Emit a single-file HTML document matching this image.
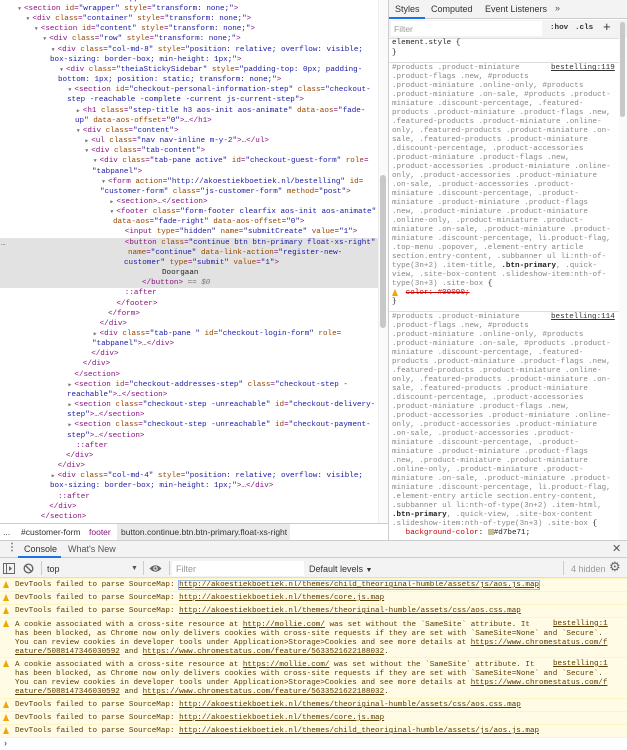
<!DOCTYPE html>
<html><head><meta charset="utf-8"><style>
*{margin:0;padding:0;box-sizing:border-box}
body{width:627px;height:750px;overflow:hidden;background:#fff;position:relative;font-family:"Liberation Sans",sans-serif;color:#222}
.m{font-family:"Liberation Mono",monospace;font-size:7.6px}
#el{position:absolute;left:0;top:4px;width:378px;line-height:10.16px}
#el div{position:relative;white-space:pre;height:10.16px}
.ar{position:absolute;font-size:5px;color:#6e6e6e;top:0}
.t{color:#881280}.a{color:#994500}.v{color:#1a1aa6}.k{color:#222}
.hl{position:absolute;left:0;top:237.7px;width:378px;height:50.8px;background:#e2e2e2}
.abs{position:absolute;white-space:pre}
#sty{position:absolute;left:392px;line-height:9px;color:#888;white-space:pre}
.cl{position:absolute;left:0;width:627px;background:#fffbe5;border-top:1px solid #fff5c2;color:#5c3c00;line-height:9px;white-space:pre}
.cl u{text-decoration:underline}
.wi{position:absolute;left:3px;width:0;height:0;border-left:3.5px solid transparent;border-right:3.5px solid transparent;border-bottom:7px solid #f2a600}
</style></head><body>

<div class="hl"></div>
<div class="abs m" style="left:1px;top:240px;color:#555">…</div>

<div id="el" class="m">
<div style="padding-left:24px"><span class="ar" style="left:18px">▼</span><span class="t">&lt;section</span> <span class="a">id</span><span class="t">=</span><span class="v">"wrapper"</span> <span class="a">style</span><span class="t">=</span><span class="v">"transform: none;"</span><span class="t">&gt;</span></div>
<div style="padding-left:32.4px"><span class="ar" style="left:26.4px">▼</span><span class="t">&lt;div</span> <span class="a">class</span><span class="t">=</span><span class="v">"container"</span> <span class="a">style</span><span class="t">=</span><span class="v">"transform: none;"</span><span class="t">&gt;</span></div>
<div style="padding-left:40.8px"><span class="ar" style="left:34.8px">▼</span><span class="t">&lt;section</span> <span class="a">id</span><span class="t">=</span><span class="v">"content"</span> <span class="a">style</span><span class="t">=</span><span class="v">"transform: none;"</span><span class="t">&gt;</span></div>
<div style="padding-left:49.2px"><span class="ar" style="left:43.2px">▼</span><span class="t">&lt;div</span> <span class="a">class</span><span class="t">=</span><span class="v">"row"</span> <span class="a">style</span><span class="t">=</span><span class="v">"transform: none;"</span><span class="t">&gt;</span></div>
<div style="padding-left:57.6px"><span class="ar" style="left:51.6px">▼</span><span class="t">&lt;div</span> <span class="a">class</span><span class="t">=</span><span class="v">"col-md-8"</span> <span class="a">style</span><span class="t">=</span><span class="v">"position: relative; overflow: visible;</span></div>
<div style="padding-left:50px"><span class="v">box-sizing: border-box; min-height: 1px;"</span><span class="t">&gt;</span></div>
<div style="padding-left:66px"><span class="ar" style="left:60px">▼</span><span class="t">&lt;div</span> <span class="a">class</span><span class="t">=</span><span class="v">"theiaStickySidebar"</span> <span class="a">style</span><span class="t">=</span><span class="v">"padding-top: 0px; padding-</span></div>
<div style="padding-left:58px"><span class="v">bottom: 1px; position: static; transform: none;"</span><span class="t">&gt;</span></div>
<div style="padding-left:74.4px"><span class="ar" style="left:68.4px">▼</span><span class="t">&lt;section</span> <span class="a">id</span><span class="t">=</span><span class="v">"checkout-personal-information-step"</span> <span class="a">class</span><span class="t">=</span><span class="v">"checkout-</span></div>
<div style="padding-left:67px"><span class="v">step -reachable -complete -current js-current-step"</span><span class="t">&gt;</span></div>
<div style="padding-left:82.8px"><span class="ar" style="left:76.8px">▶</span><span class="t">&lt;h1</span> <span class="a">class</span><span class="t">=</span><span class="v">"step-title h3 aos-init aos-animate"</span> <span class="a">data-aos</span><span class="t">=</span><span class="v">"fade-</span></div>
<div style="padding-left:75px"><span class="v">up"</span> <span class="a">data-aos-offset</span><span class="t">=</span><span class="v">"0"</span><span class="t">&gt;</span>…<span class="t">&lt;/h1&gt;</span></div>
<div style="padding-left:82.8px"><span class="ar" style="left:76.8px">▼</span><span class="t">&lt;div</span> <span class="a">class</span><span class="t">=</span><span class="v">"content"</span><span class="t">&gt;</span></div>
<div style="padding-left:91.2px"><span class="ar" style="left:85.2px">▶</span><span class="t">&lt;ul</span> <span class="a">class</span><span class="t">=</span><span class="v">"nav nav-inline m-y-2"</span><span class="t">&gt;</span>…<span class="t">&lt;/ul&gt;</span></div>
<div style="padding-left:91.2px"><span class="ar" style="left:85.2px">▼</span><span class="t">&lt;div</span> <span class="a">class</span><span class="t">=</span><span class="v">"tab-content"</span><span class="t">&gt;</span></div>
<div style="padding-left:99.6px"><span class="ar" style="left:93.6px">▼</span><span class="t">&lt;div</span> <span class="a">class</span><span class="t">=</span><span class="v">"tab-pane active"</span> <span class="a">id</span><span class="t">=</span><span class="v">"checkout-guest-form"</span> <span class="a">role</span><span class="t">=</span></div>
<div style="padding-left:92px"><span class="v">"tabpanel"</span><span class="t">&gt;</span></div>
<div style="padding-left:108px"><span class="ar" style="left:102px">▼</span><span class="t">&lt;form</span> <span class="a">action</span><span class="t">=</span><span class="v">"http://akoestiekboetiek.nl/bestelling"</span> <span class="a">id</span><span class="t">=</span></div>
<div style="padding-left:100px"><span class="v">"customer-form"</span> <span class="a">class</span><span class="t">=</span><span class="v">"js-customer-form"</span> <span class="a">method</span><span class="t">=</span><span class="v">"post"</span><span class="t">&gt;</span></div>
<div style="padding-left:116.4px"><span class="ar" style="left:110.4px">▶</span><span class="t">&lt;section&gt;</span>…<span class="t">&lt;/section&gt;</span></div>
<div style="padding-left:116.4px"><span class="ar" style="left:110.4px">▼</span><span class="t">&lt;footer</span> <span class="a">class</span><span class="t">=</span><span class="v">"form-footer clearfix aos-init aos-animate"</span></div>
<div style="padding-left:113px"><span class="a">data-aos</span><span class="t">=</span><span class="v">"fade-right"</span> <span class="a">data-aos-offset</span><span class="t">=</span><span class="v">"0"</span><span class="t">&gt;</span></div>
<div style="padding-left:124.8px"><span class="t">&lt;input</span> <span class="a">type</span><span class="t">=</span><span class="v">"hidden"</span> <span class="a">name</span><span class="t">=</span><span class="v">"submitCreate"</span> <span class="a">value</span><span class="t">=</span><span class="v">"1"</span><span class="t">&gt;</span></div>
<div style="padding-left:124.8px"><span class="t">&lt;button</span> <span class="a">class</span><span class="t">=</span><span class="v">"continue btn btn-primary float-xs-right"</span></div>
<div style="padding-left:128px"><span class="a">name</span><span class="t">=</span><span class="v">"continue"</span> <span class="a">data-link-action</span><span class="t">=</span><span class="v">"register-new-</span></div>
<div style="padding-left:124px"><span class="v">customer"</span> <span class="a">type</span><span class="t">=</span><span class="v">"submit"</span> <span class="a">value</span><span class="t">=</span><span class="v">"1"</span><span class="t">&gt;</span></div>
<div style="padding-left:162px" class="k">Doorgaan</div>
<div style="padding-left:142px"><span class="t">&lt;/button&gt;</span> <span style="color:#777">== <i>$0</i></span></div>
<div style="padding-left:124.8px"><span class="t">::after</span></div>
<div style="padding-left:116.4px"><span class="t">&lt;/footer&gt;</span></div>
<div style="padding-left:108px"><span class="t">&lt;/form&gt;</span></div>
<div style="padding-left:99.6px"><span class="t">&lt;/div&gt;</span></div>
<div style="padding-left:99.6px"><span class="ar" style="left:93.6px">▶</span><span class="t">&lt;div</span> <span class="a">class</span><span class="t">=</span><span class="v">"tab-pane "</span> <span class="a">id</span><span class="t">=</span><span class="v">"checkout-login-form"</span> <span class="a">role</span><span class="t">=</span></div>
<div style="padding-left:92px"><span class="v">"tabpanel"</span><span class="t">&gt;</span>…<span class="t">&lt;/div&gt;</span></div>
<div style="padding-left:91.2px"><span class="t">&lt;/div&gt;</span></div>
<div style="padding-left:82.8px"><span class="t">&lt;/div&gt;</span></div>
<div style="padding-left:74.4px"><span class="t">&lt;/section&gt;</span></div>
<div style="padding-left:74.4px"><span class="ar" style="left:68.4px">▶</span><span class="t">&lt;section</span> <span class="a">id</span><span class="t">=</span><span class="v">"checkout-addresses-step"</span> <span class="a">class</span><span class="t">=</span><span class="v">"checkout-step -</span></div>
<div style="padding-left:67px"><span class="v">reachable"</span><span class="t">&gt;</span>…<span class="t">&lt;/section&gt;</span></div>
<div style="padding-left:74.4px"><span class="ar" style="left:68.4px">▶</span><span class="t">&lt;section</span> <span class="a">class</span><span class="t">=</span><span class="v">"checkout-step -unreachable"</span> <span class="a">id</span><span class="t">=</span><span class="v">"checkout-delivery-</span></div>
<div style="padding-left:67px"><span class="v">step"</span><span class="t">&gt;</span>…<span class="t">&lt;/section&gt;</span></div>
<div style="padding-left:74.4px"><span class="ar" style="left:68.4px">▶</span><span class="t">&lt;section</span> <span class="a">class</span><span class="t">=</span><span class="v">"checkout-step -unreachable"</span> <span class="a">id</span><span class="t">=</span><span class="v">"checkout-payment-</span></div>
<div style="padding-left:67px"><span class="v">step"</span><span class="t">&gt;</span>…<span class="t">&lt;/section&gt;</span></div>
<div style="padding-left:76px"><span class="t">::after</span></div>
<div style="padding-left:66px"><span class="t">&lt;/div&gt;</span></div>
<div style="padding-left:57.6px"><span class="t">&lt;/div&gt;</span></div>
<div style="padding-left:57.6px"><span class="ar" style="left:51.6px">▶</span><span class="t">&lt;div</span> <span class="a">class</span><span class="t">=</span><span class="v">"col-md-4"</span> <span class="a">style</span><span class="t">=</span><span class="v">"position: relative; overflow: visible;</span></div>
<div style="padding-left:50px"><span class="v">box-sizing: border-box; min-height: 1px;"</span><span class="t">&gt;</span>…<span class="t">&lt;/div&gt;</span></div>
<div style="padding-left:58px"><span class="t">::after</span></div>
<div style="padding-left:49.2px"><span class="t">&lt;/div&gt;</span></div>
<div style="padding-left:40.8px"><span class="t">&lt;/section&gt;</span></div>
</div>
<div class="abs m" style="left:34px;top:-6px;line-height:10px"><span class="t">&lt;div</span> <span class="a">class</span><span class="t">=</span><span class="v">"inner-wrapper"</span></div>

<!-- elements scrollbar -->
<div style="position:absolute;left:378px;top:0;width:10px;height:523px;background:#fafafa;border-left:1px solid #eee"></div>
<div style="position:absolute;left:380px;top:175px;width:6px;height:153px;background:#c8c8c8;border-radius:3px"></div>

<!-- divider -->
<div style="position:absolute;left:388px;top:0;width:1px;height:540px;background:#ccc"></div>

<!-- styles pane -->
<div style="position:absolute;left:389px;top:0;width:238px;height:19px;background:#f3f3f3;border-bottom:1px solid #ccc"></div>
<div class="abs" style="left:395px;top:4px;font-size:9px;color:#333">Styles</div>
<div style="position:absolute;left:389px;top:17px;width:36px;height:2px;background:#1a73e8"></div>
<div class="abs" style="left:431px;top:4px;font-size:9px;color:#333">Computed</div>
<div class="abs" style="left:485px;top:4px;font-size:9px;color:#333">Event Listeners</div>
<div class="abs" style="left:555px;top:3px;font-size:9px;color:#555">»</div>
<div style="position:absolute;left:389px;top:20px;width:238px;height:18px;background:#f3f3f3"></div>
<div style="position:absolute;left:391px;top:21px;width:151px;height:15px;background:#fff"></div>
<div class="abs" style="left:394px;top:24px;font-size:8.5px;color:#999">Filter</div>
<div class="abs m" style="left:550px;top:24px;font-weight:bold;color:#333">:hov</div>
<div class="abs m" style="left:575px;top:24px;font-weight:bold;color:#333">.cls</div>
<div class="abs" style="left:603px;top:19px;font-size:13px;color:#333">+</div>
<div style="position:absolute;left:389px;top:38px;width:230px;height:1px;background:#ddd"></div>
<div class="abs m" style="left:392px;top:39px;line-height:9.5px;color:#222">element.style {
}</div>
<div style="position:absolute;left:389px;top:62px;width:230px;height:1px;background:#ddd"></div>
<div id="sty" class="m" style="top:64.2px">#products .product-miniature
.product-flags .new, #products
.product-miniature .online-only, #products
.product-miniature .on-sale, #products .product-
miniature .discount-percentage, .featured-
products .product-miniature .product-flags .new,
.featured-products .product-miniature .online-
only, .featured-products .product-miniature .on-
sale, .featured-products .product-miniature
.discount-percentage, .product-accessories
.product-miniature .product-flags .new,
.product-accessories .product-miniature .online-
only, .product-accessories .product-miniature
.on-sale, .product-accessories .product-
miniature .discount-percentage, .product-
miniature .product-miniature .product-flags
.new, .product-miniature .product-miniature
.online-only, .product-miniature .product-
miniature .on-sale, .product-miniature .product-
miniature .discount-percentage, li.product-flag,
.top-menu .popover, .element-entry article
section.entry-content, .subbanner ul li:nth-of-
type(3n+2) .item-title, <b style="color:#222">.btn-primary</b>, .quick-
view, .site-box-content .slideshow-item:nth-of-
type(3n+3) .site-box <span style="color:#222">{</span>
<span style="color:#c80000">   <s>color: #00000;</s></span>
<span style="color:#222">}</span></div>
<div class="wi" style="left:392px;top:289px"></div>
<div class="abs m" style="left:551px;top:64.2px;line-height:9px;color:#333;text-decoration:underline">bestelling:119</div>
<div style="position:absolute;left:389px;top:311px;width:230px;height:1px;background:#ddd"></div>
<div id="sty2" class="m abs" style="left:392px;top:313.2px;line-height:9px;color:#888">#products .product-miniature
.product-flags .new, #products
.product-miniature .online-only, #products
.product-miniature .on-sale, #products .product-
miniature .discount-percentage, .featured-
products .product-miniature .product-flags .new,
.featured-products .product-miniature .online-
only, .featured-products .product-miniature .on-
sale, .featured-products .product-miniature
.discount-percentage, .product-accessories
.product-miniature .product-flags .new,
.product-accessories .product-miniature .online-
only, .product-accessories .product-miniature
.on-sale, .product-accessories .product-
miniature .discount-percentage, .product-
miniature .product-miniature .product-flags
.new, .product-miniature .product-miniature
.online-only, .product-miniature .product-
miniature .on-sale, .product-miniature .product-
miniature .discount-percentage, li.product-flag,
.element-entry article section.entry-content,
.subbanner ul li:nth-of-type(3n+2) .item-html,
<b style="color:#222">.btn-primary</b>, .quick-view, .site-box-content
.slideshow-item:nth-of-type(3n+3) .site-box <span style="color:#222">{</span>
<span style="color:#c80000">   background-color</span><span style="color:#222">: <span style="display:inline-block;width:6px;height:6px;background:#d7be71;border:1px solid #bbb;vertical-align:-1px"></span>#d7be71;</span></div>
<div class="abs m" style="left:551px;top:313.2px;line-height:9px;color:#333;text-decoration:underline">bestelling:114</div>
<div style="position:absolute;left:619px;top:40px;width:8px;height:500px;background:#fafafa"></div>
<div style="position:absolute;left:620px;top:22px;width:5px;height:95px;background:#c8c8c8;border-radius:3px"></div>

<!-- breadcrumbs -->
<div style="position:absolute;left:0;top:523px;width:388px;height:17px;background:#fff;border-top:1px solid #ccc"></div>
<div style="position:absolute;left:117px;top:524px;width:173px;height:16px;background:#eaeaea"></div>
<div class="abs" style="left:3px;top:527px;font-size:8.5px;color:#333">...</div>
<div class="abs" style="left:21px;top:527px;font-size:8.5px;color:#333">#customer-form</div>
<div class="abs" style="left:89px;top:527px;font-size:8.5px;color:#881280">footer</div>
<div class="abs" style="left:121px;top:527px;font-size:8.5px;color:#333">button.continue.btn.btn-primary.float-xs-right</div>

<!-- drawer tabs -->
<div style="position:absolute;left:0;top:540px;width:627px;height:18px;background:#f3f3f3;border-top:1px solid #ccc;border-bottom:1px solid #ccc"></div>
<div class="abs" style="left:7px;top:542px;font-size:10px;color:#666;font-weight:bold">⋮</div>
<div class="abs" style="left:24px;top:544px;font-size:9px;color:#333">Console</div>
<div style="position:absolute;left:18px;top:556px;width:43px;height:2px;background:#1a73e8"></div>
<div class="abs" style="left:68px;top:544px;font-size:9px;color:#555">What's New</div>
<div class="abs" style="left:612px;top:542px;font-size:11px;color:#555">✕</div>

<!-- toolbar -->
<div style="position:absolute;left:0;top:558px;width:627px;height:20px;background:#f3f3f3;border-bottom:1px solid #ddd"></div>
<svg style="position:absolute;left:3px;top:563px" width="12" height="11" viewBox="0 0 12 11"><rect x="0.5" y="0.5" width="11" height="10" fill="none" stroke="#666"/><line x1="3.5" y1="1" x2="3.5" y2="10" stroke="#666"/><path d="M6 3 L9 5.5 L6 8 Z" fill="#666"/></svg>
<svg style="position:absolute;left:23px;top:563px" width="11" height="11" viewBox="0 0 11 11"><circle cx="5.5" cy="5.5" r="4.3" fill="none" stroke="#666" stroke-width="1.4"/><line x1="2.5" y1="2.5" x2="8.5" y2="8.5" stroke="#666" stroke-width="1.4"/></svg>
<div style="position:absolute;left:41px;top:561px;width:1px;height:14px;background:#ccc"></div>
<div class="abs" style="left:47px;top:564px;font-size:9px;color:#333">top</div>
<div class="abs" style="left:131px;top:565px;font-size:7px;color:#555">▼</div>
<div style="position:absolute;left:143px;top:561px;width:1px;height:14px;background:#ccc"></div>
<svg style="position:absolute;left:149px;top:564px" width="13" height="9" viewBox="0 0 13 9"><path d="M0.5 4.5 Q6.5 -2 12.5 4.5 Q6.5 11 0.5 4.5 Z" fill="#666"/><circle cx="6.5" cy="4.5" r="2.2" fill="#f3f3f3"/><circle cx="6.5" cy="4.5" r="1.2" fill="#666"/></svg>
<div style="position:absolute;left:169px;top:561px;width:1px;height:14px;background:#ccc"></div>
<div style="position:absolute;left:172px;top:561px;width:132px;height:15px;background:#fff"></div>
<div class="abs" style="left:176px;top:564px;font-size:9px;color:#999">Filter</div>
<div class="abs" style="left:309px;top:564px;font-size:9px;color:#333">Default levels <span style="font-size:7px">▼</span></div>
<div style="position:absolute;left:563px;top:561px;width:1px;height:14px;background:#ccc"></div>
<div class="abs" style="left:571px;top:564px;font-size:9px;color:#999">4 hidden</div>
<div class="abs" style="left:609px;top:559px;font-size:13px;color:#666">⚙</div>

<!-- console messages -->
<div class="cl m" style="top:578px;height:13px;padding:2px 0 0 15px">DevTools failed to parse SourceMap: <u style="outline:1px solid #9bb8e0">http://akoestiekboetiek.nl/themes/child_theoriginal-humble/assets/js/aos.js.map</u></div>
<div class="cl m" style="top:591px;height:13px;padding:2px 0 0 15px">DevTools failed to parse SourceMap: <u>http://akoestiekboetiek.nl/themes/core.js.map</u></div>
<div class="cl m" style="top:604px;height:13px;padding:2px 0 0 15px">DevTools failed to parse SourceMap: <u>http://akoestiekboetiek.nl/themes/theoriginal-humble/assets/css/aos.css.map</u></div>
<div class="cl m" style="top:617px;height:40px;padding:2.5px 0 0 15px">A cookie associated with a cross-site resource at <u>http://mollie.com/</u> was set without the `SameSite` attribute. It
has been blocked, as Chrome now only delivers cookies with cross-site requests if they are set with `SameSite=None` and `Secure`.
You can review cookies in developer tools under Application&gt;Storage&gt;Cookies and see more details at <u>https://www.chromestatus.com/f</u>
<u>eature/5088147346030592</u> and <u>https://www.chromestatus.com/feature/5633521622188032</u>.</div>
<div class="cl m" style="top:657px;height:41px;padding:2.5px 0 0 15px">A cookie associated with a cross-site resource at <u>https://mollie.com/</u> was set without the `SameSite` attribute. It
has been blocked, as Chrome now only delivers cookies with cross-site requests if they are set with `SameSite=None` and `Secure`.
You can review cookies in developer tools under Application&gt;Storage&gt;Cookies and see more details at <u>https://www.chromestatus.com/f</u>
<u>eature/5088147346030592</u> and <u>https://www.chromestatus.com/feature/5633521622188032</u>.</div>
<div class="cl m" style="top:698px;height:13px;padding:2px 0 0 15px">DevTools failed to parse SourceMap: <u>http://akoestiekboetiek.nl/themes/theoriginal-humble/assets/css/aos.css.map</u></div>
<div class="cl m" style="top:711px;height:13px;padding:2px 0 0 15px">DevTools failed to parse SourceMap: <u>http://akoestiekboetiek.nl/themes/core.js.map</u></div>
<div class="cl m" style="top:724px;height:14px;padding:2px 0 0 15px;border-bottom:1px solid #fff5c2">DevTools failed to parse SourceMap: <u>http://akoestiekboetiek.nl/themes/child_theoriginal-humble/assets/js/aos.js.map</u></div>
<div class="abs m" style="left:553px;top:619.5px;color:#5c3c00;text-decoration:underline">bestelling:1</div>
<div class="abs m" style="left:553px;top:659.5px;color:#5c3c00;text-decoration:underline">bestelling:1</div>
<div class="wi" style="top:581px"></div><div class="wi" style="top:594px"></div><div class="wi" style="top:607px"></div>
<div class="wi" style="top:620px"></div><div class="wi" style="top:660px"></div>
<div class="wi" style="top:701px"></div><div class="wi" style="top:714px"></div><div class="wi" style="top:727px"></div>
<div class="abs" style="left:4px;top:738px;font-size:9px;color:#1a73e8;font-weight:bold">›</div>
</body></html>
